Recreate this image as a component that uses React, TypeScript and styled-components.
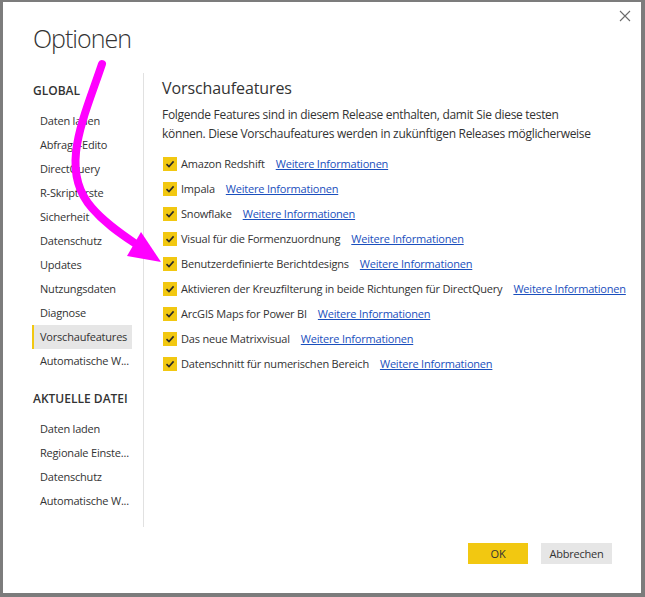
import React from "react";
import styled, {createGlobalStyle} from "styled-components";

const GlobalStyle = createGlobalStyle`
    html, body {
        margin: 0;
        padding: 0;
        background: #ffffff;
    }
    body {
        font-family: "Open Sans", "Noto Sans", sans-serif;
        color: #333333;
    }
`;

const Window = styled.div`
    position: relative;
    box-sizing: border-box;
    width: 645px;
    height: 597px;
    background: #ffffff;
    border-style: solid;
    border-color: #7c7c7c;
    border-width: 2px 4px 4px 3px;
    display: flex;
    flex-direction: column;
    overflow: hidden;
`;

const Header = styled.div`
    height: 71px;
    display: flex;
    justify-content: space-between;
    align-items: flex-start;
    padding: 0 10px 0 30px;
`;

const Title = styled.h1`
    margin: 20px 0 0 0;
    font-weight: 300;
    font-size: 25px;
    line-height: 32px;
    color: #333333;
    letter-spacing: -1px;
`;

const CloseButton = styled.button`
    margin-top: 8px;
    width: 12px;
    height: 12px;
    padding: 0;
    border: none;
    background: none;
    display: flex;
    align-items: center;
    justify-content: center;
`;

const Body = styled.div`
    display: flex;
    height: 454px;
    padding-left: 29px;
`;

const Sidebar = styled.nav`
    width: 111px;
    padding-top: 6px;
    flex-shrink: 0;
`;

const SectionTitle = styled.div<{$gap?: number}>`
    margin-top: ${p => p.$gap || 0}px;
    margin-bottom: 6px;
    padding-left: 1px;
    height: 24px;
    line-height: 24px;
    font-size: 12px;
    font-weight: 600;
    color: #333333;
    text-transform: uppercase;
`;

const NavItem = styled.div<{$active?: boolean}>`
    width: 100px;
    box-sizing: border-box;
    height: 24px;
    line-height: 24px;
    font-size: 11px;
    letter-spacing: -0.2px;
    padding-left: 6px;
    border-left: 2px solid ${p => p.$active ? "#f2c811" : "transparent"};
    background: ${p => p.$active ? "#e6e6e6" : "transparent"};
    white-space: nowrap;
    overflow: hidden;
    color: #333333;
`;

const Content = styled.section`
    flex: 1;
    border-left: 1px solid #e1e1e1;
    padding: 3px 0 0 18px;
`;

const Heading = styled.h2`
    margin: 0;
    font-weight: 400;
    font-size: 16px;
    letter-spacing: -0.1px;
    line-height: 24px;
    color: #333333;
`;

const Description = styled.p`
    margin: 5px 0 8px 0;
    font-size: 12px;
    letter-spacing: -0.3px;
    line-height: 19px;
    color: #333333;
`;

const FeatureRow = styled.label`
    display: flex;
    align-items: center;
    height: 25px;
    font-size: 11px;
    letter-spacing: -0.2px;
    white-space: nowrap;
    color: #333333;
`;

const Box = styled.span`
    width: 14px;
    height: 14px;
    background: #f2c811;
    display: flex;
    align-items: center;
    justify-content: center;
    margin: 0 4px 0 1px;
    flex-shrink: 0;
`;

const MoreLink = styled.a`
    margin-left: 11px;
    color: #1a4fbd;
    text-decoration: underline;
    cursor: pointer;
`;

const Footer = styled.div`
    flex: 1;
    display: flex;
    justify-content: flex-end;
    align-items: flex-start;
    gap: 13px;
    padding: 16px 29px 0 0;
`;

const DialogButton = styled.button<{$primary?: boolean}>`
    height: 21px;
    width: ${p => p.$primary ? 60 : 71}px;
    padding: 0;
    border: none;
    background: ${p => p.$primary ? "#f2c811" : "#e6e6e6"};
    font-family: inherit;
    font-size: 11px;
    letter-spacing: -0.2px;
    color: #333333;
`;

const ArrowLayer = styled.svg`
    position: absolute;
    left: -3px;
    top: -2px;
    pointer-events: none;
`;

const globalItems = [
    "Daten laden", "Abfrage-Edito", "DirectQuery", "R-Skripterste", "Sicherheit",
    "Datenschutz", "Updates", "Nutzungsdaten", "Diagnose", "Vorschaufeatures", "Automatische W...",
];

const fileItems = ["Daten laden", "Regionale Einste...", "Datenschutz", "Automatische W..."];

const features = [
    "Amazon Redshift",
    "Impala",
    "Snowflake",
    "Visual für die Formenzuordnung",
    "Benutzerdefinierte Berichtdesigns",
    "Aktivieren der Kreuzfilterung in beide Richtungen für DirectQuery",
    "ArcGIS Maps for Power BI",
    "Das neue Matrixvisual",
    "Datenschnitt für numerischen Bereich",
];

const Check = () => (
    <svg width="10" height="10" viewBox="0 0 10 10">
        <path d="M1.5 5.2 L4 7.6 L8.6 2.4" fill="none" stroke="#2b2b2b" strokeWidth="1.6" />
    </svg>
);

export default function App() {
    return (
        <>
            <GlobalStyle />
            <Window>
                <Header>
                    <Title>Optionen</Title>
                    <CloseButton aria-label="Schließen">
                        <svg width="12" height="12" viewBox="0 0 12 12">
                            <path d="M1 1 L11 11 M11 1 L1 11" stroke="#6b6b6b" strokeWidth="1.1" />
                        </svg>
                    </CloseButton>
                </Header>
                <Body>
                    <Sidebar>
                        <SectionTitle>Global</SectionTitle>
                        {globalItems.map(item => (
                            <NavItem key={item} $active={item === "Vorschaufeatures"}>{item}</NavItem>
                        ))}
                        <SectionTitle $gap={14}>Aktuelle Datei</SectionTitle>
                        {fileItems.map(item => (
                            <NavItem key={item}>{item}</NavItem>
                        ))}
                    </Sidebar>
                    <Content>
                        <Heading>Vorschaufeatures</Heading>
                        <Description>
                            Folgende Features sind in diesem Release enthalten, damit Sie diese testen<br />
                            können. Diese Vorschaufeatures werden in zukünftigen Releases möglicherweise
                        </Description>
                        {features.map(f => (
                            <FeatureRow key={f}>
                                <Box><Check /></Box>
                                {f}
                                <MoreLink>Weitere Informationen</MoreLink>
                            </FeatureRow>
                        ))}
                    </Content>
                </Body>
                <Footer>
                    <DialogButton $primary>OK</DialogButton>
                    <DialogButton>Abbrechen</DialogButton>
                </Footer>
                <ArrowLayer width="645" height="597" viewBox="0 0 645 597">
                    <path d="M102 64 C 84 118, 58 170, 92 208 C 104 222, 118 232, 136 244"
                          fill="none" stroke="#ff00ff" strokeWidth="8" strokeLinecap="round" />
                    <polygon points="141,232 127,256 161,262" fill="#ff00ff" />
                </ArrowLayer>
            </Window>
        </>
    );
}
